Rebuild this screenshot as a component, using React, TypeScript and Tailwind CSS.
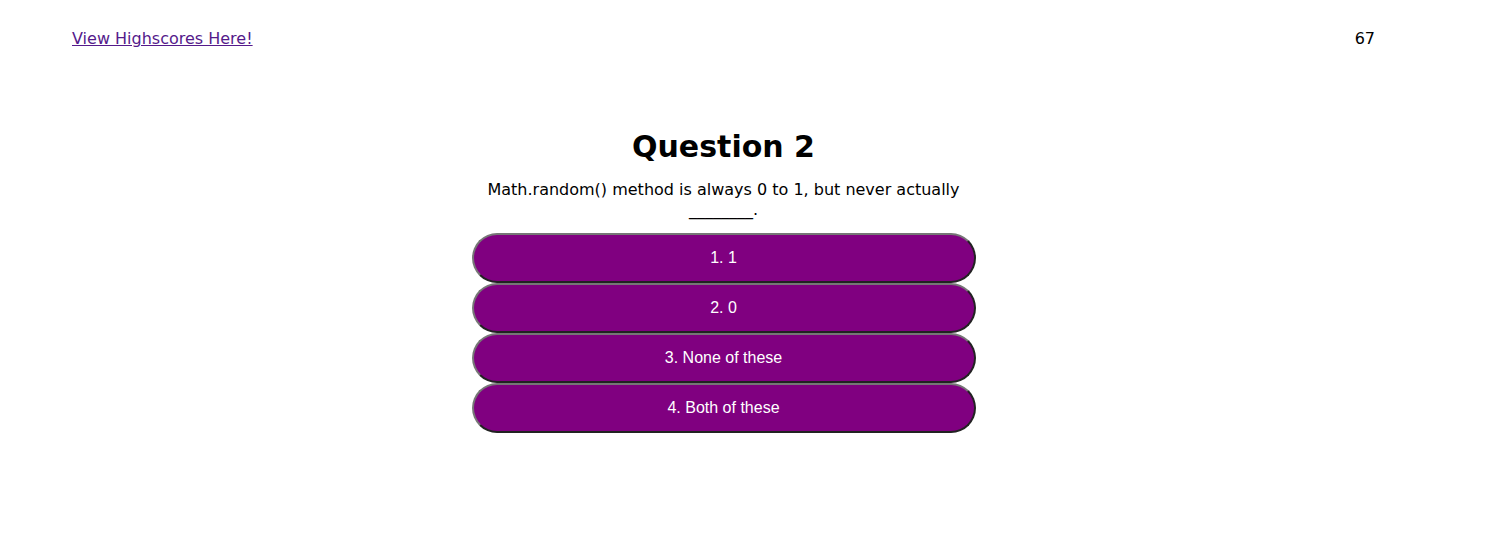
import { useState } from 'react';

const choices = ['1. 1', '2. 0', '3. None of these', '4. Both of these'];

export default function App() {
  const [time] = useState(67);

  return (
    <div className="min-h-[543px] bg-white text-black font-['Verdana','DejaVu_Sans',sans-serif] text-[16px]">
      <header className="flex justify-between items-start pl-[72px] pr-[128px] pt-[29px]">
        <a href="#highscores" className="underline text-[#551a8b] leading-[20px]">View Highscores Here!</a>
        <span className="leading-[20px]">{time}</span>
      </header>

      <div className="flex justify-center pr-[56px]">
        <main className="w-[504px] mt-[80px] flex flex-col items-center">
          <h1 className="text-[30px] font-bold leading-[36px] text-center">Question 2</h1>
          <p className="mt-[15px] px-[6px] text-center leading-[20px]">
            Math.random() method is always 0 to 1, but never actually ________.
          </p>
          <div className="mt-[13px] w-full flex flex-col">
            {choices.map((c) => (
              <button
                key={c}
                className="h-[50px] w-full rounded-full bg-[#800080] text-white font-['Arial','Liberation_Sans',sans-serif] text-[16px] border-2 border-solid border-t-[#767676] border-l-[#767676] border-b-[#222222] border-r-[#222222]"
              >
                {c}
              </button>
            ))}
          </div>
        </main>
      </div>
    </div>
  );
}
